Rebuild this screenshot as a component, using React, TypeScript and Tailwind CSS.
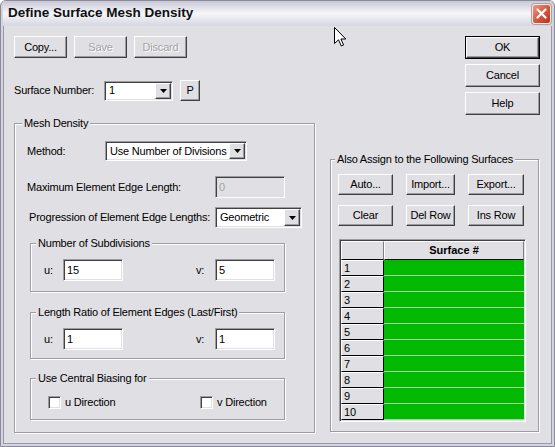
import React from "react";

const raised =
  "border border-t-white border-l-white border-r-[#404040] border-b-[#404040] shadow-[inset_-1px_-1px_0_#9d9da1] bg-[#e0dfe3]";
const sunken =
  "border border-t-[#9d9da1] border-l-[#9d9da1] border-r-white border-b-white shadow-[inset_1px_1px_0_#404040,inset_-1px_-1px_0_#e0dfe3]";

function Button({
  label,
  className,
  disabled,
  isDefault,
}: {
  label: string;
  className: string;
  disabled?: boolean;
  isDefault?: boolean;
}) {
  const text = disabled ? "text-[#a3a3a3] [text-shadow:1px_1px_0_#fff]" : "text-black";
  if (isDefault) {
    return (
      <div className={`border border-black ${className}`}>
        <div className={`flex h-full items-center justify-center ${raised} ${text}`}>{label}</div>
      </div>
    );
  }
  return (
    <div className={`flex items-center justify-center ${raised} ${text} ${className}`}>{label}</div>
  );
}

function Arrow() {
  return (
    <svg width="7" height="4" viewBox="0 0 7 4">
      <path d="M0 0h7L3.5 4z" fill="#000" />
    </svg>
  );
}

function Combo({ value, className }: { value: string; className: string }) {
  return (
    <div className={`flex bg-white p-[1px] ${sunken} ${className}`}>
      <div className="flex flex-1 items-center pl-[3px]">{value}</div>
      <div className={`flex w-[16px] items-center justify-center ${raised}`}>
        <Arrow />
      </div>
    </div>
  );
}

function Field({ value }: { value: string }) {
  return <div className={`flex h-[22px] w-[60px] items-center bg-white pl-[3px] ${sunken}`}>{value}</div>;
}

function Group({
  title,
  className,
  legendClass,
  children,
}: {
  title: string;
  className: string;
  legendClass: string;
  children?: React.ReactNode;
}) {
  return (
    <div className={`border border-[#9d9da1] shadow-[inset_1px_1px_0_#fff,1px_1px_0_#fff] ${className}`}>
      <div className={`-mt-[7px] w-fit bg-[#e0dfe3] px-[2px] leading-[13px] ${legendClass}`}>{title}</div>
      {children}
    </div>
  );
}

function UVRow({ u, v }: { u: string; v: string }) {
  return (
    <div className="mt-[9px] flex h-[22px] items-center pl-[13px]">
      <span className="w-[19px]">u:</span>
      <Field value={u} />
      <span className="ml-[73px] w-[19px]">v:</span>
      <Field value={v} />
    </div>
  );
}

function Check({ label }: { label: string }) {
  return (
    <div className="flex items-center gap-[4px]">
      <div className={`h-[13px] w-[13px] bg-white ${sunken}`} />
      <span>{label}</span>
    </div>
  );
}

export default function App() {
  const rows = [1, 2, 3, 4, 5, 6, 7, 8, 9, 10];
  return (
    <div className="relative h-[447px] w-[555px] overflow-hidden font-['Liberation_Sans',Arial,sans-serif] text-[11px] tracking-[-0.2px] text-black">
      <div className="flex h-full flex-col rounded-t-[6px] border border-[#8a8a9a] bg-[#d4d4de] px-[2px] pb-[2px]">
        {/* title bar */}
        <div className="flex h-[25px] shrink-0 items-center justify-between bg-gradient-to-b from-[#c9c9d6] via-[#f6f6fa] to-[#d6d6e0] pl-[5px] pr-[1px]">
          <span className="text-[13.5px] font-bold tracking-normal text-[#101010]">Define Surface Mesh Density</span>
          <div className="flex h-[20px] w-[19px] items-center justify-center rounded-[3px] border border-[#f4e8e6] bg-gradient-to-br from-[#eb9a86] via-[#d55a40] to-[#b8321c] shadow-[0_0_0_1px_#b0a0a0]">
            <svg width="11" height="11" viewBox="0 0 11 11">
              <path d="M1.5 1.5l8 8M9.5 1.5l-8 8" stroke="#fff" strokeWidth="2.2" strokeLinecap="round" />
            </svg>
          </div>
        </div>

        {/* body */}
        <div className="flex flex-1 border-x border-b border-[#9898a8] bg-[#e0dfe3] pl-[10px] pt-[10px]">
          {/* left column */}
          <div className="flex w-[301px] flex-col">
            <div className="flex gap-[7px]">
              <Button label="Copy..." className="h-[22px] w-[53px]" />
              <Button label="Save" className="h-[22px] w-[53px]" disabled />
              <Button label="Discard" className="h-[22px] w-[53px]" disabled />
            </div>

            <div className="mt-[22px] flex h-[21px] items-center">
              <span className="w-[90px]">Surface Number:</span>
              <Combo value="1" className="h-[20px] w-[69px]" />
              <Button label="P" className="ml-[7px] h-[21px] w-[20px]" />
            </div>

            <Group title="Mesh Density" className="mt-[22px] h-[310px] w-[301px]" legendClass="ml-[7px]">
              <div className="mt-[11px] flex h-[20px] items-center pl-[12px]">
                <span className="w-[78px]">Method:</span>
                <Combo value="Use Number of Divisions" className="h-[20px] w-[142px]" />
              </div>
              <div className="mt-[15px] flex h-[22px] items-center pl-[12px]">
                <span className="w-[188px]">Maximum Element Edge Length:</span>
                <div className={`flex h-[22px] w-[70px] items-center bg-[#e0dfe3] pl-[3px] text-[#a3a3a3] ${sunken}`}>0</div>
              </div>
              <div className="mt-[9px] flex h-[21px] items-center pl-[14px]">
                <span className="w-[186px]">Progression of Element Edge Lengths:</span>
                <Combo value="Geometric" className="h-[21px] w-[87px]" />
              </div>

              <Group title="Number of Subdivisions" className="ml-[15px] mt-[15px] h-[49px] w-[255px]" legendClass="ml-[5px]">
                <UVRow u="15" v="5" />
              </Group>

              <Group
                title="Length Ratio of Element Edges (Last/First)"
                className="ml-[15px] mt-[20px] h-[47px] w-[255px]"
                legendClass="ml-[5px]"
              >
                <UVRow u="1" v="1" />
              </Group>

              <Group title="Use Central Biasing for" className="ml-[15px] mt-[19px] h-[42px] w-[255px]" legendClass="ml-[5px]">
                <div className="mt-[9px] flex pl-[17px]">
                  <div className="w-[152px]">
                    <Check label="u Direction" />
                  </div>
                  <Check label="v Direction" />
                </div>
              </Group>
            </Group>
          </div>

          {/* right column */}
          <div className="ml-[15px] flex w-[212px] flex-col">
            <div className="flex flex-col items-end gap-[5px] pr-[2px]">
              <Button label="OK" className="h-[23px] w-[75px]" isDefault />
              <Button label="Cancel" className="h-[23px] w-[75px]" />
              <Button label="Help" className="h-[23px] w-[75px]" />
            </div>

            <Group
              title="Also Assign to the Following Surfaces"
              className="mt-[44px] h-[273px] w-[209px]"
              legendClass="ml-[4px]"
            >
              <div className="mt-[8px] flex gap-[13px] pl-[7px]">
                <Button label="Auto..." className="h-[21px] w-[55px]" />
                <Button label="Import..." className="h-[21px] w-[49px]" />
                <Button label="Export..." className="h-[21px] w-[56px]" />
              </div>
              <div className="mt-[10px] flex gap-[13px] pl-[7px]">
                <Button label="Clear" className="h-[21px] w-[55px]" />
                <Button label="Del Row" className="h-[21px] w-[49px]" />
                <Button label="Ins Row" className="h-[21px] w-[56px]" />
              </div>

              <div className={`ml-[8px] mt-[13px] h-[183px] w-[187px] bg-[#f4f4f4] p-[1px] ${sunken}`}>
                <div className="flex h-[19px]">
                  <div className="w-[43px] border border-t-white border-l-white border-r-[#808080] border-b-black bg-[#e0dfe3]" />
                  <div className="flex flex-1 items-center justify-center border border-t-white border-l-white border-r-[#808080] border-b-black bg-[#e0dfe3] font-bold tracking-normal">
                    Surface #
                  </div>
                </div>
                {rows.map((n) => (
                  <div key={n} className="flex h-[16px]">
                    <div className="w-[43px] border border-t-white border-l-white border-r-black border-b-black bg-[#e0dfe3] pl-[2px] leading-[14px]">
                      {n}
                    </div>
                    <div className="flex-1 border-b border-b-[#9ed69e] bg-[#00b900]" />
                  </div>
                ))}
              </div>
            </Group>
          </div>
        </div>
      </div>

      {/* mouse pointer */}
      <svg className="absolute left-[334px] top-[27px]" width="13" height="20" viewBox="0 0 13 20">
        <path
          d="M0.5 0.5L0.5 16.5L4.5 12.8L7.3 19L9.6 18L6.9 12H11.8Z"
          fill="#fff"
          stroke="#000"
          strokeWidth="1"
          strokeLinejoin="miter"
        />
      </svg>
    </div>
  );
}
